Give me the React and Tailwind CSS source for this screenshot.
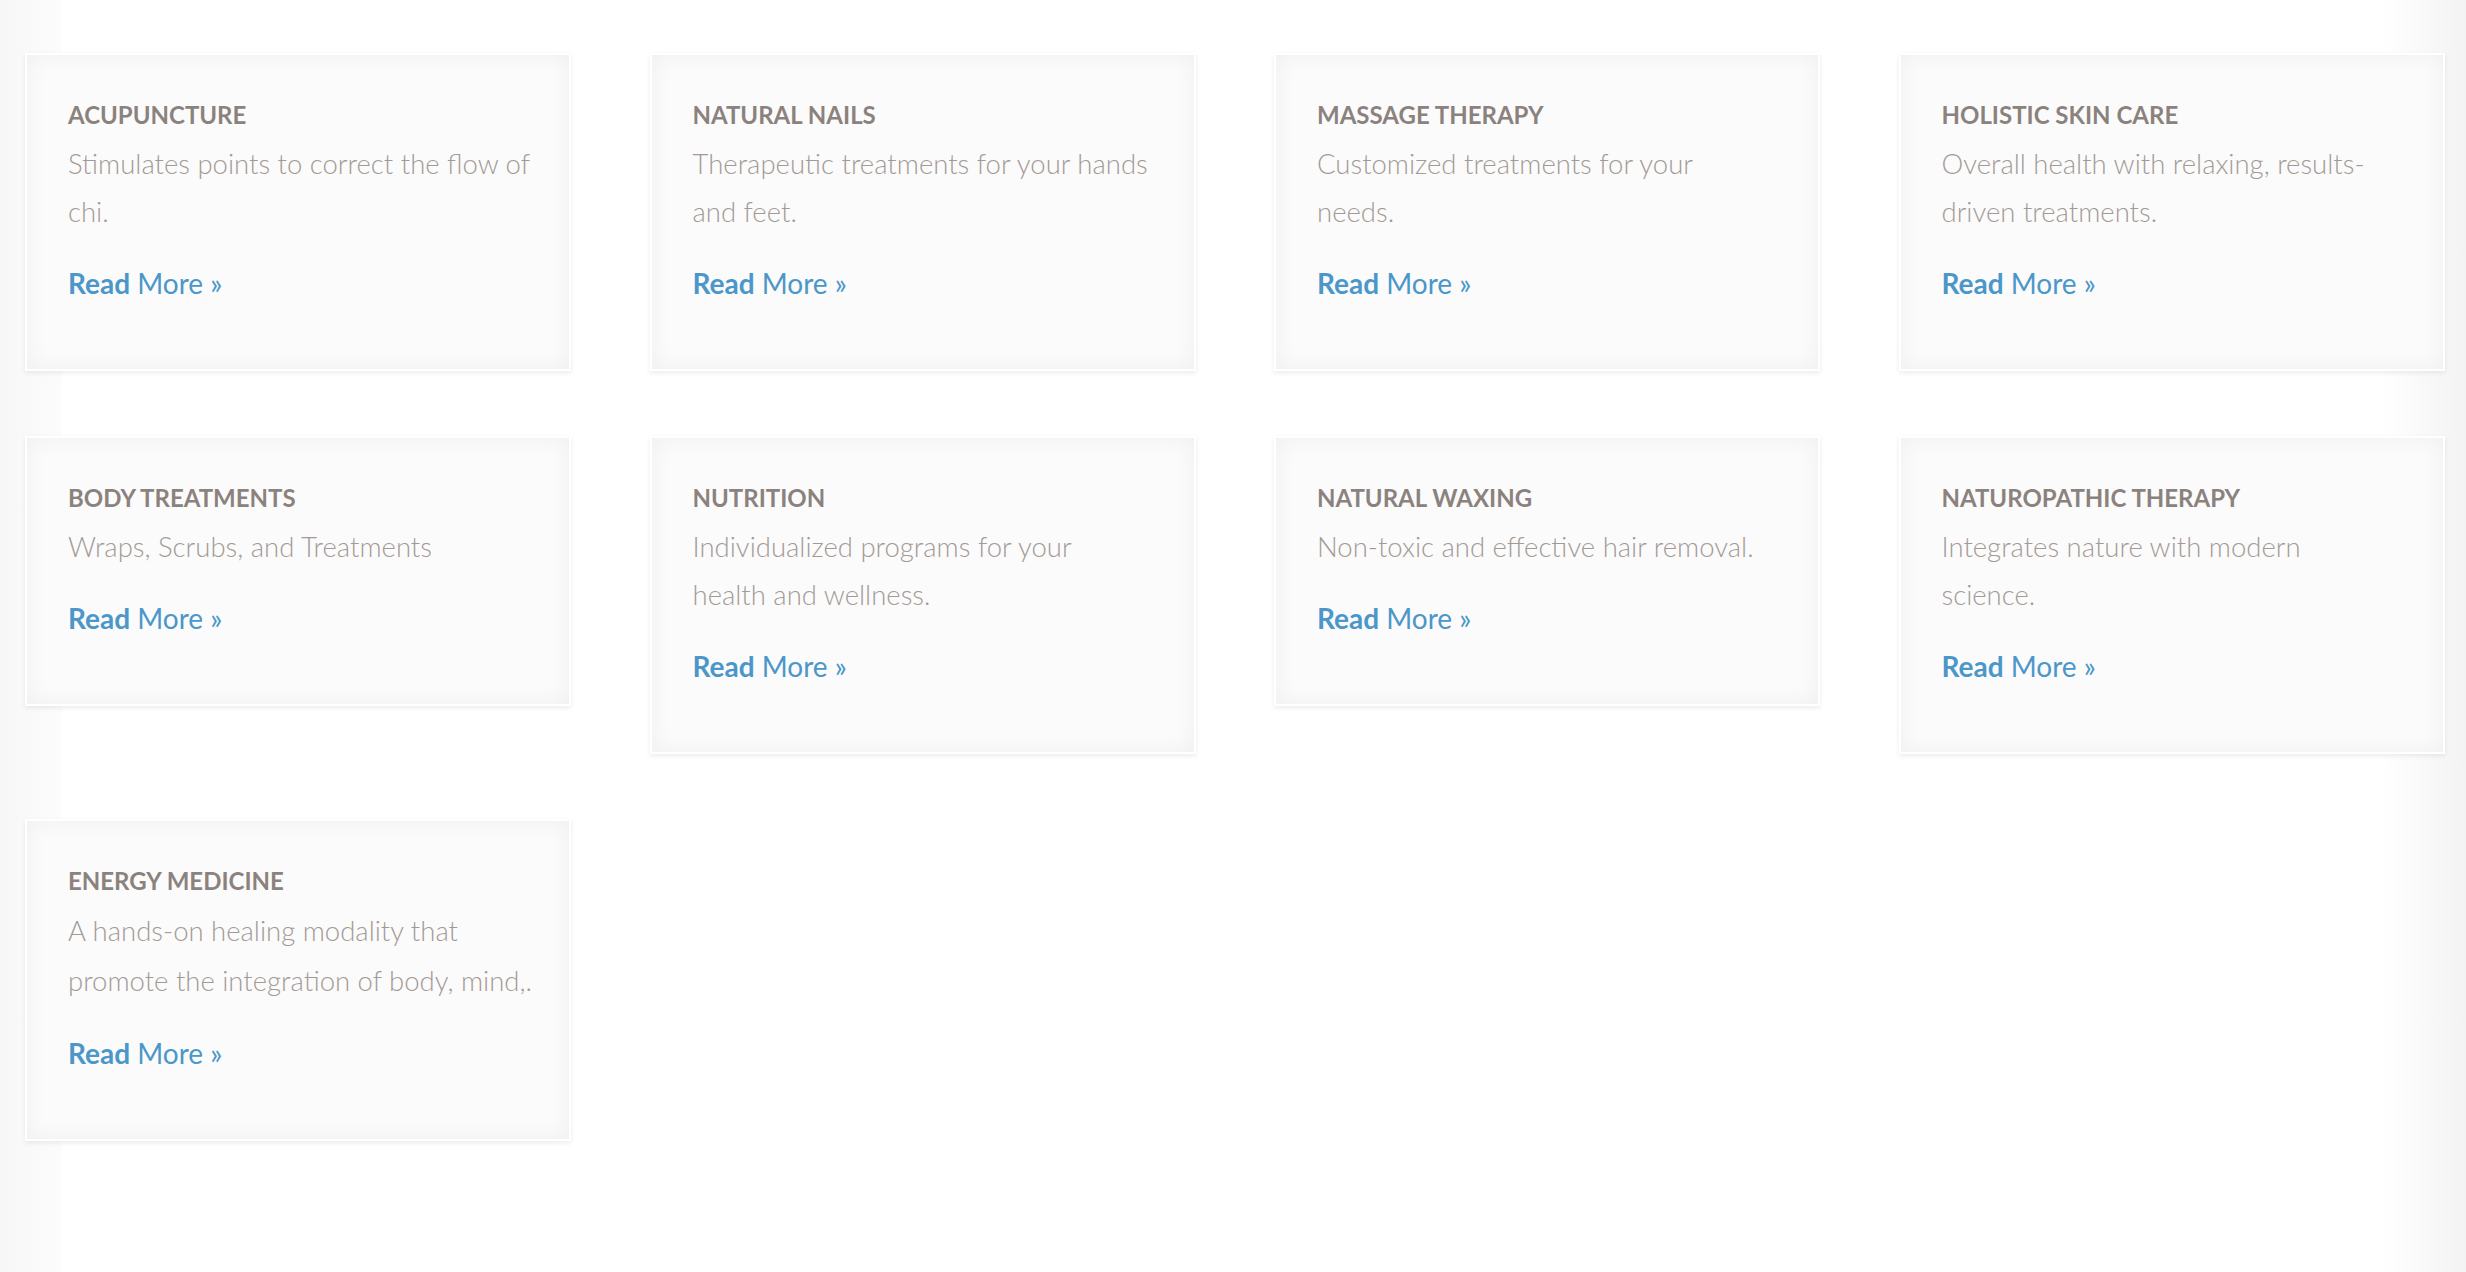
const services = [
  { title: 'Acupuncture', lines: ['Stimulates points to correct the flow of', 'chi.'] },
  { title: 'Natural Nails', lines: ['Therapeutic treatments for your hands', 'and feet.'] },
  { title: 'Massage Therapy', lines: ['Customized treatments for your', 'needs.'] },
  { title: 'Holistic Skin Care', lines: ['Overall health with relaxing, results-', 'driven treatments.'] },
  { title: 'Body Treatments', lines: ['Wraps, Scrubs, and Treatments'] },
  { title: 'Nutrition', lines: ['Individualized programs for your', 'health and wellness.'] },
  { title: 'Natural Waxing', lines: ['Non-toxic and effective hair removal.'] },
  { title: 'Naturopathic Therapy', lines: ['Integrates nature with modern', 'science.'] },
  { title: 'Energy Medicine', lines: ['A hands-on healing modality that', 'promote the integration of body, mind,.'], wide: true },
];

function ServiceCard({ title, lines, wide }) {
  return (
    <div className="border-2 border-white bg-[#fbfbfb] pl-[41px] pr-[30px] pt-[45px] pb-[66px] shadow-[inset_0_0_22px_rgba(0,0,0,0.05),0_2px_5px_rgba(0,0,0,0.08)]">
      <div className="text-[24px] leading-[30px] font-bold uppercase text-[#8b827e]">{title}</div>
      <div
        className={wide ? 'mt-[10px] text-[27.5px] leading-[50px] font-light whitespace-nowrap text-[#a39a96]' : 'mt-[10px] text-[27.5px] leading-[48px] font-light whitespace-nowrap text-[#a39a96]'}
        style={{ fontFamily: '"Lato Light", Lato, sans-serif' }}
      >
        {lines.map((l, i) => (
          <div key={i}>{l}</div>
        ))}
      </div>
      <a href="#" className="mt-[27px] block text-[28px] leading-[40px] text-[#4b97c9]">
        <span className="font-bold">Read</span> More »
      </a>
    </div>
  );
}

export default function App() {
  return (
    <div
      className="min-h-screen bg-[linear-gradient(to_right,#f7f7f7_0px,#fcfcfc_62px,#ffffff_62px,#ffffff_2383px,#f3f3f3_100%)] pl-[25px] pt-[53px] pb-[120px]"
      style={{ fontFamily: 'Lato, "Open Sans", sans-serif' }}
    >
      <div className="grid grid-cols-[repeat(4,546px)] gap-x-[78.5px] gap-y-[65px] items-start">
        {services.map((s) => (
          <ServiceCard key={s.title} {...s} />
        ))}
      </div>
    </div>
  );
}
